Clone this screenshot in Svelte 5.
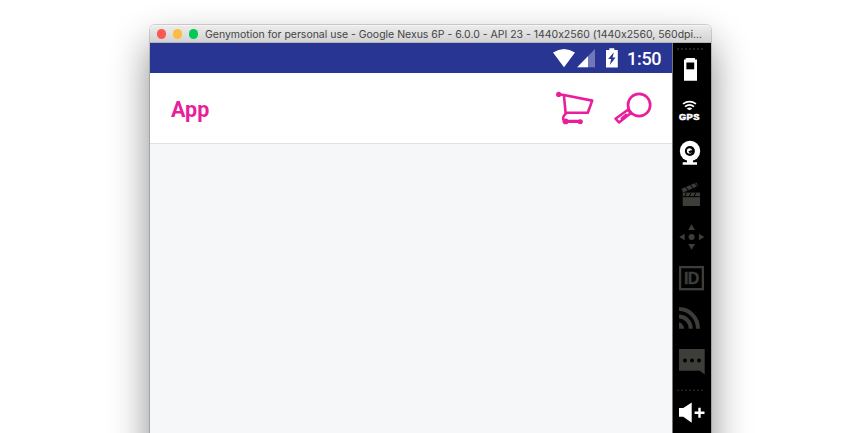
<script>
  const dots = [0, 1, 2, 3, 4, 5, 6];
</script>

<main>
  <section class="window">
    <header class="titlebar">
      <i class="light red"></i><i class="light amber"></i><i class="light green"></i>
      <span class="title">Genymotion for personal use - Google Nexus 6P - 6.0.0 - API 23 - 1440x2560 (1440x2560, 560dpi...</span>
    </header>
    <div class="body">
      <div class="screen">
        <div class="status">
          <svg width="70" height="30" viewBox="550 43 70 30">
            <path fill="#fff" d="M553 52.6Q564 45.2 575 52.6L564 67.3Z" />
            <path fill="#7078b8" d="M577.2 67.2L595 49V67.2Z" />
            <path fill="#fff" d="M577.2 67.2L588 56.2V67.2Z" />
            <path fill="#fff" d="M606 50H609.3V48.2H614.3V50H617.8V67.4H606Z" />
            <path fill="#283593" d="M613.8 52.2L608.2 59H611.2L609.8 65L615.6 57.6H612.6Z" />
          </svg>
          <span class="time">1:50</span>
        </div>
        <div class="appbar">
          <span class="name">App</span>
          <svg width="100" height="40" viewBox="554 88 100 40" fill="none" stroke="#e91e9c" stroke-linejoin="round" stroke-linecap="round">
            <circle cx="558.7" cy="94.4" r="2.6" fill="#e91e9c" stroke="none" />
            <path stroke-width="2.6" d="M559 94.2L563.8 95L592.2 100.6L587.8 112.8H565.6L563.9 95" />
            <path stroke-width="2.5" d="M566.3 113.2C563.6 115.2 562.7 117 563.2 119.5" />
            <path stroke-width="3.2" d="M564.3 121.3H581" />
            <circle cx="565.6" cy="121.4" r="2.9" fill="#e91e9c" stroke="none" />
            <circle cx="580.2" cy="121.8" r="2.5" fill="#e91e9c" stroke="none" />
            <circle cx="639.1" cy="105" r="11.1" stroke-width="2.7" />
            <path stroke-width="2.5" d="M627.9 109.8L615.5 118.7L619 122.5L630.9 113Z" />
            <path stroke-width="2" d="M628 110.5L631.5 114M621.5 118.3L626 114.5" />
          </svg>
        </div>
      </div>
      <aside>
        <svg width="38" height="10" viewBox="0 43 38 10">
          {#each dots as d}<rect x={4.3 + d * 4} y="48.3" width="1.5" height="1.4" fill="#444" />{/each}
        </svg>
        <svg width="38" height="37" viewBox="0 53 38 37">
          <path fill="#fff" d="M11 59.5H12.7V58H22V59.5H24V80.7H11Z" />
          <rect x="13.4" y="62.5" width="7.8" height="6.8" />
        </svg>
        <svg width="38" height="42" viewBox="0 90 38 42">
          <path fill="none" stroke="#fff" stroke-width="1.6" d="M10 103.8Q16.5 99.4 23 103.8M12 106.7Q16.5 103 21 106.7" />
          <path fill="#fff" d="M13.7 108.8Q16.5 106.2 19.3 108.8L16.5 110.3Z" />
          <text x="5.9" y="119.6" textLength="20.6" fill="#fff" stroke="#fff" stroke-width=".6" font-size="9.3" font-weight="700">GPS</text>
        </svg>
        <svg width="38" height="42" viewBox="0 132 38 42">
          <circle cx="17" cy="151" r="10.2" fill="#fff" />
          <path fill="#fff" d="M14 160H20V162.2H24V164.8H9.7V162.2H14Z" />
          <circle cx="16.9" cy="151" r="5" />
          <circle cx="16.5" cy="150.9" r="2.6" fill="#fff" />
          <circle cx="17.4" cy="151.4" r="1.7" />
          <circle cx="16.6" cy="150" r="1" fill="#fff" />
        </svg>
        <svg class="dim" width="38" height="42" viewBox="0 174 38 42">
          <path d="M9.7 192.6H27V206H9.7Z" />
          <path d="M8.6 188.8L23.4 182.4L25 185.9L10.1 192.6Z" />
          <path stroke="#000" stroke-width="1" d="M9.7 196.7H27M13.3 193L11.6 196.5M18 193L16.3 196.5M22.7 193L21 196.5M12.5 186.8L15.3 190.5M17.2 184.6L20 188.3M21.5 182.6L24.2 186.4" />
        </svg>
        <svg class="dim" width="38" height="42" viewBox="0 216 38 42">
          <circle cx="18.6" cy="237" r="3" />
          <path d="M18.6 224.3L22 230H15.2ZM18.6 249.7L15.2 244H22ZM6.2 237L11.7 233.7V240.3ZM31.4 237L25.9 233.7V240.3Z" />
        </svg>
        <svg class="dim" width="38" height="42" viewBox="0 258 38 42">
          <rect x="7.1" y="267.1" width="22.8" height="22.1" fill="none" stroke="#3d3d39" stroke-width="2.3" />
          <text x="10.9" y="284.1" font-size="16" font-weight="700" textLength="15.3" stroke="#3d3d39" stroke-width=".4">ID</text>
        </svg>
        <svg class="dim" width="38" height="42" viewBox="0 300 38 42">
          <g fill="none" stroke="#3d3d39" stroke-width="4">
            <path d="M6 309A19 19.7 0 0 1 25 328.7M6 316.6A11.7 12 0 0 1 17.7 328.7" />
          </g>
          <path d="M6 322.3Q10.7 324 11.2 328.7H6Z" />
        </svg>
        <svg class="dim" width="38" height="42" viewBox="0 342 38 42">
          <path d="M6 349H31.7V374.5L26.7 370.7H6Z" />
          <g fill="#000"><circle cx="12" cy="360.4" r="2" /><circle cx="19" cy="360.4" r="2" /><circle cx="26" cy="360.4" r="2" /></g>
        </svg>
        <svg width="38" height="12" viewBox="0 384 38 12">
          {#each dots as d}<rect x={4.3 + d * 4} y="389.8" width="1.5" height="1" fill="#444" />{/each}
        </svg>
        <svg width="38" height="37" viewBox="0 396 38 37">
          <path fill="#fff" d="M6 408H10.3L18.7 402.5V422.8L10.3 416.8H6Z" />
          <path fill="none" stroke="#fff" stroke-width="2.4" d="M21.6 412.7H31.5M26.5 407.7V417.7" />
        </svg>
      </aside>
    </div>
  </section>
</main>

<style>
  :global(body) { margin: 0; background: #fff; }
  main {
    box-sizing: border-box;
    width: 862px;
    height: 433px;
    padding: 25px 0 0 150px;
    overflow: hidden;
    font-family: Roboto, "Liberation Sans", sans-serif;
  }
  .window {
    width: 561px;
    height: 520px;
    border-radius: 5px 5px 0 0;
    box-shadow: 0 0 0 1px rgba(0, 0, 0, 0.16), 0 19px 38px rgba(0, 0, 0, 0.48);
  }
  .titlebar {
    box-sizing: border-box;
    height: 18px;
    display: flex;
    align-items: center;
    padding-left: 7px;
    border-radius: 5px 5px 0 0;
    background: linear-gradient(#ebebeb, #d3d3d3);
    border-top: 1px solid #f5f5f5;
    border-bottom: 1px solid #b5b5b5;
  }
  .light { width: 9.4px; height: 9.4px; border-radius: 50%; margin-right: 6.6px; flex: none; }
  .red { background: #fc5753; }
  .amber { background: #fdbc40; }
  .green { background: #00ca56; }
  .title {
    font-family: Inter, sans-serif;
    font-size: 10.5px;
    font-feature-settings: "calt" 0;
    line-height: 16px;
    padding-top: 1px;
    color: #444;
    white-space: nowrap;
    letter-spacing: -0.012px;
  }
  .body { display: flex; height: 502px; }
  .screen { width: 522px; background: #f5f7f9; border-right: 1px solid #777; }
  .status {
    height: 30px;
    background: #283593;
    display: flex;
    justify-content: flex-end;
    align-items: center;
    padding-right: 11px;
  }
  .time {
    width: 34px;
    margin-left: 7px;
    padding-top: 1px;
    color: #fff;
    font-size: 18px;
    font-weight: 500;
    line-height: 30px;
    white-space: nowrap;
    letter-spacing: -0.3px;
  }
  .appbar {
    height: 70px;
    background: #fff;
    border-bottom: 1px solid #dfe1e3;
    display: flex;
    align-items: center;
    justify-content: space-between;
    padding: 0 18px 0 21px;
  }
  .name { color: #e91e9c; font-weight: 700; font-size: 21.5px; padding-top: 2px; }
  aside { width: 38px; background: #000; display: flex; flex-direction: column; font-family: "Liberation Sans", sans-serif; }
  svg { display: block; flex: none; }
  .dim { fill: #3d3d39; }
</style>
